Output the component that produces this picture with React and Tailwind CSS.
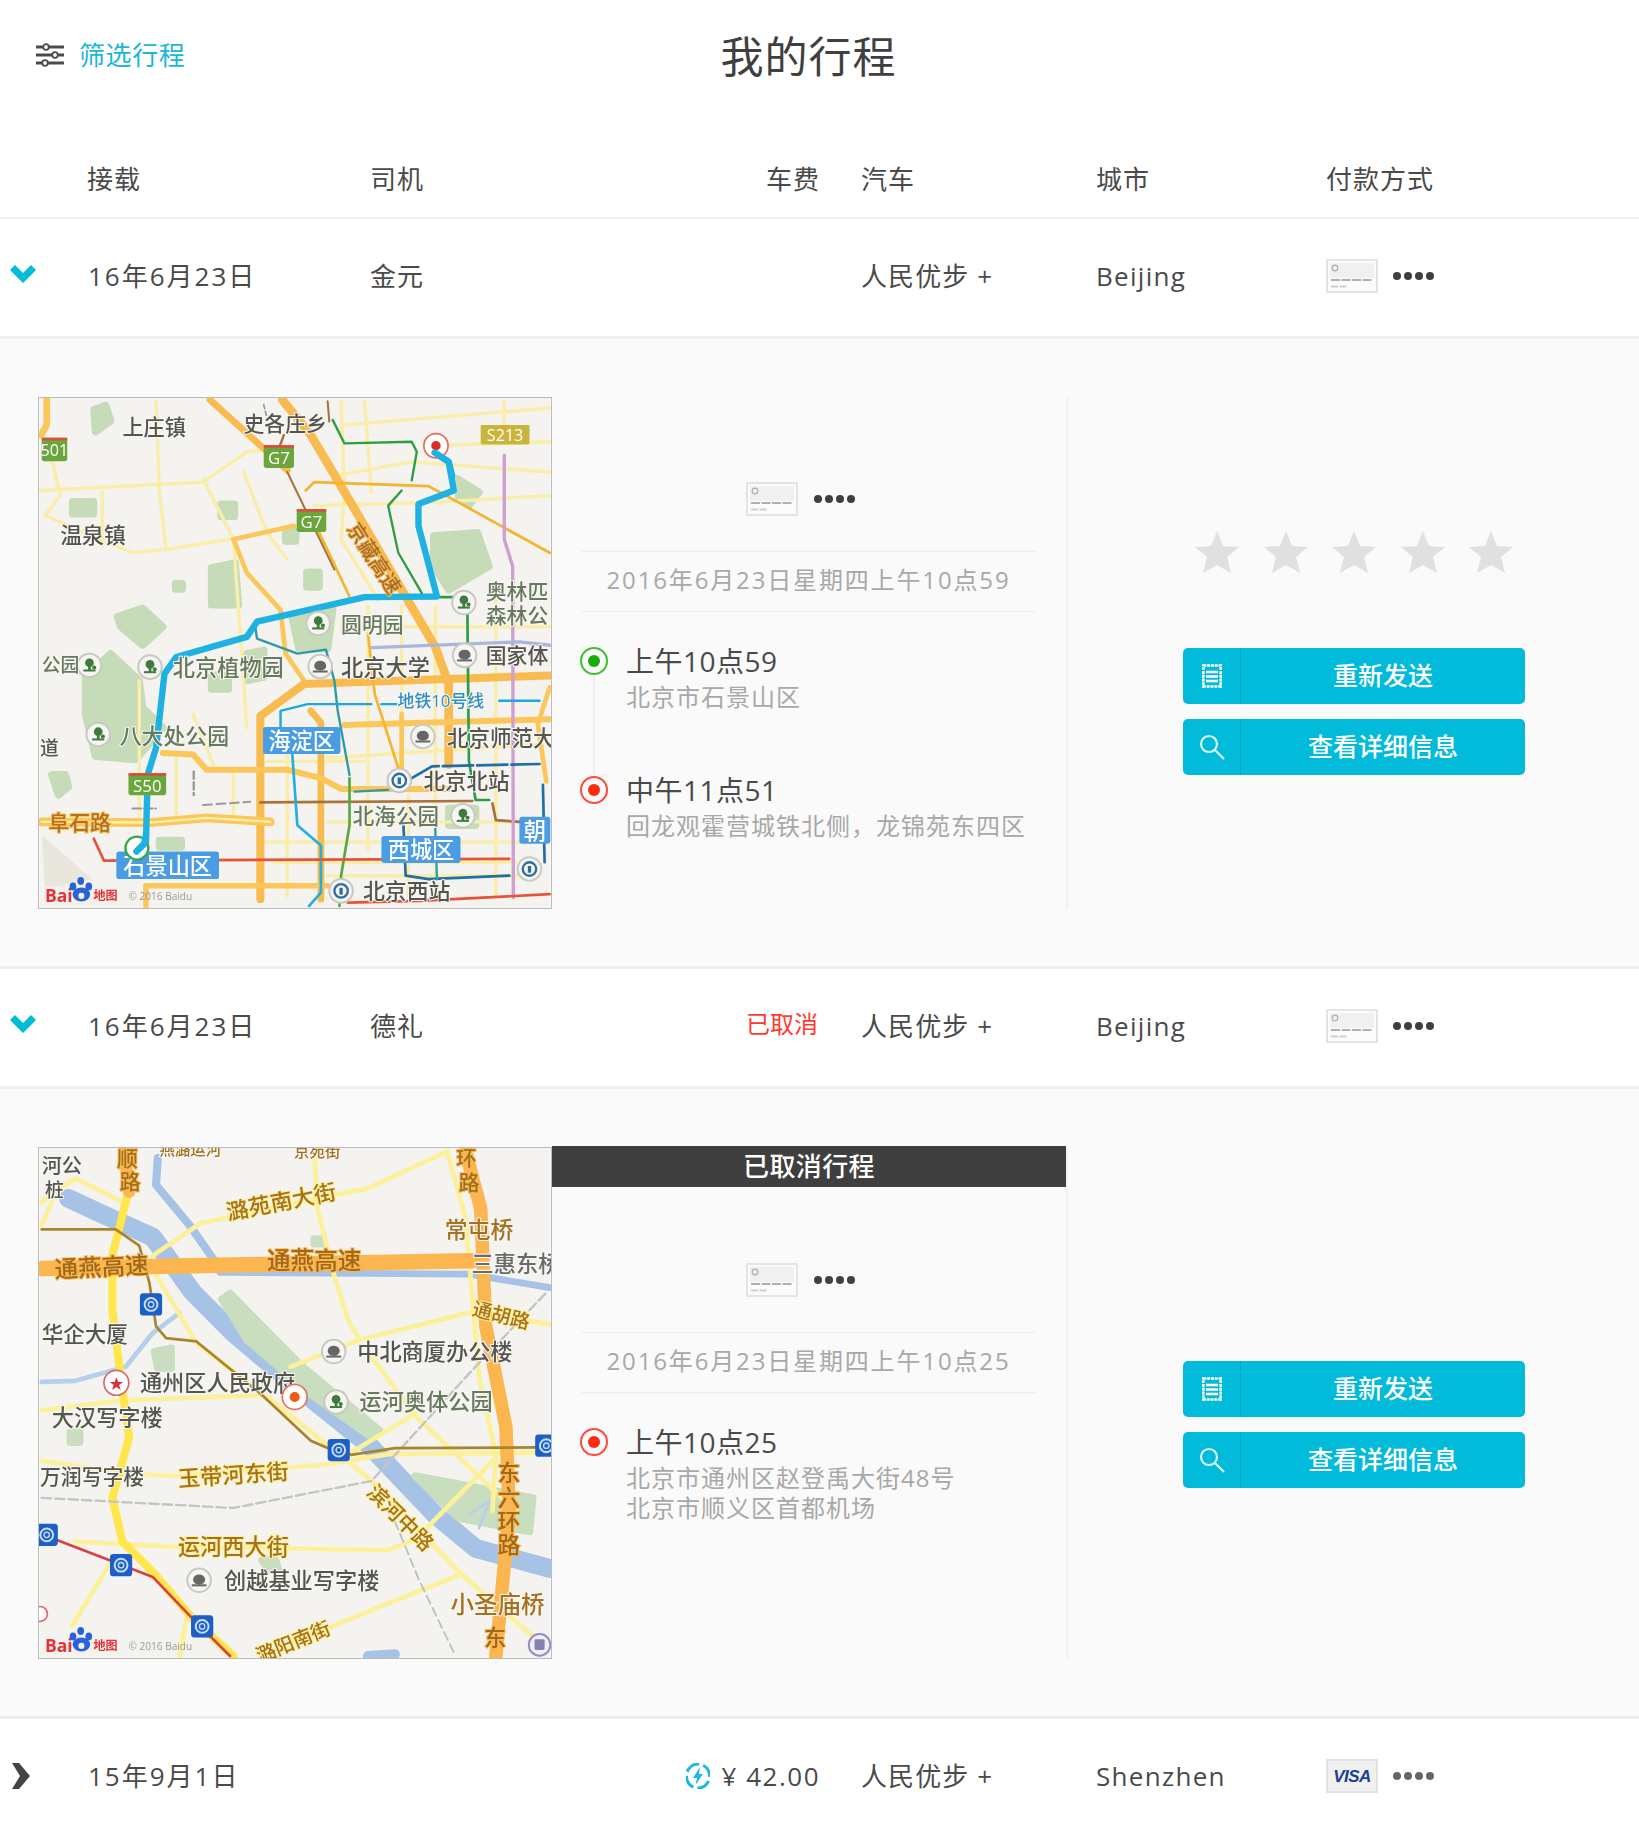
import React from "react";

const FONT = "[font-family:'Open_Sans','Noto_Sans_CJK_SC',sans-serif]";

function Lines({ items }) {
  return (
    <>
      {items.map(([color, width, points, dash], i) => (
        <polyline key={i} points={points} fill="none" stroke={color} strokeWidth={width} strokeLinejoin="round" strokeLinecap="round" strokeDasharray={dash} />
      ))}
    </>
  );
}

function Polys({ color, items }) {
  return (
    <>
      {items.map((p, i) => (
        <polygon key={i} points={p} fill={color} stroke={color} strokeWidth="22" strokeLinejoin="round" />
      ))}
    </>
  );
}

function L({ x, y, s = 62, c = "#55554f", r, h = "#f8f6f2", w = 500, t }) {
  return (
    <text
      x={x}
      y={y}
      fontSize={s}
      fill={c}
      fontWeight={w}
      dominantBaseline="central"
      stroke={h}
      strokeWidth="6"
      paintOrder="stroke"
      transform={r ? `rotate(${r} ${x} ${y})` : undefined}
    >
      {t}
    </text>
  );
}

function Badge({ x, y, w, h, fill, t, s = 62, rx = 8, top }) {
  return (
    <g>
      <rect x={x} y={y} width={w} height={h} rx={rx} fill={fill} />
      {top && <rect x={x} y={y} width={w} height="8" fill={top} />}
      <text x={x + w / 2} y={y + h / 2 + (top ? 3 : 0)} fontSize={s} fontWeight="500" fill="#fff" textAnchor="middle" dominantBaseline="central">
        {t}
      </text>
    </g>
  );
}

function Poi({ x, y, kind = "park" }) {
  const c = kind === "park" ? "#3f7a3e" : "#666";
  return (
    <g>
      <circle cx={x} cy={y} r="35" fill="#f6f5f2" stroke="#c7c9c2" strokeWidth="6" />
      {kind === "park" ? (
        <>
          <circle cx={x} cy={y - 8} r="13" fill={c} />
          <rect x={x - 4} y={y - 2} width="8" height="18" fill={c} />
          <rect x={x - 18} y={y + 12} width="36" height="6" fill={c} />
          <circle cx={x + 14} cy={y + 6} r="6" fill={c} />
        </>
      ) : kind === "station" ? (
        <>
          <circle cx={x} cy={y} r="20" fill="none" stroke="#2f6e9e" strokeWidth="7" />
          <rect x={x - 5} y={y - 9} width="10" height="20" fill="#2f6e9e" />
        </>
      ) : (
        <>
          <ellipse cx={x} cy={y - 2} rx="18" ry="15" fill={c} />
          <rect x={x - 22} y={y + 12} width="44" height="6" fill={c} />
        </>
      )}
    </g>
  );
}

function SubwayBadge({ x, y }) {
  return (
    <g>
      <rect x={x - 33} y={y - 33} width="66" height="66" rx="10" fill="#1c5fc6" />
      <circle cx={x} cy={y} r="19" fill="none" stroke="#c9dcf6" strokeWidth="6" />
      <circle cx={x} cy={y} r="8" fill="none" stroke="#c9dcf6" strokeWidth="4" />
    </g>
  );
}

function BaiduMark() {
  return (
    <g>
      <rect x="38" y="1472" width="222" height="52" fill="#f3f1ec" opacity="0.85" />
      <text x="40" y="1498" fontSize="52" fontWeight="700" fill="#e2323a" dominantBaseline="central">Bai</text>
      <ellipse cx="148" cy="1496" rx="26" ry="21" fill="#2a63d8" />
      <ellipse cx="123" cy="1472" rx="10" ry="12" fill="#2a63d8" />
      <ellipse cx="146" cy="1456" rx="10" ry="12" fill="#2a63d8" />
      <ellipse cx="170" cy="1472" rx="10" ry="12" fill="#2a63d8" />
      <circle cx="148" cy="1500" r="9" fill="#f3f1ec" />
      <text x="184" y="1500" fontSize="36" fontWeight="700" fill="#e2323a" dominantBaseline="central">地图</text>
      <text x="288" y="1500" fontSize="30" fill="#9a9a96" dominantBaseline="central">© 2016 Baidu</text>
    </g>
  );
}

function MapOne() {
  return (
    <svg viewBox="25 20 1516 1516" className="block h-full w-full blur-[0.7px]" role="img">
      <rect x="25" y="20" width="1516" height="1516" fill="#f5f3ef" />
      <Polys
        color="#c6dcb9"
        items={[
          "255,670 330,645 390,700 330,755 265,700",
          "235,780 320,860 330,940 390,1000 310,1095 190,1085 160,960 160,850",
          "535,525 605,510 615,635 535,635",
          "428,572 448,572 448,588 428,588",
          "185,55 220,42 235,88 190,120",
          "122,328 184,328 184,364 122,364",
          "563,336 603,336 603,372 563,372",
          "1195,430 1325,420 1360,520 1240,590 1195,520",
          "1265,260 1330,300 1300,340 1270,320",
          "775,675 895,650 880,765 795,765",
          "818,538 855,538 855,582 818,582",
          "60,1140 100,1140 110,1175 80,1200",
          "755,415 785,415 785,445 755,445",
          "535,845 585,845 585,885 535,885",
          "380,1335 445,1335 445,1355 380,1355",
          "640,780 690,770 690,850 640,860",
          "1240,1240 1320,1240 1320,1290 1240,1290",
        ]}
      />
      <polygon points="30,1320 180,1450 40,1480" fill="#e9e6de" />
      <Lines
        items={[
          ["#f9eda9", 10, "25,295 510,270 640,180 740,170"],
          ["#f9eda9", 10, "370,30 380,300 400,470"],
          ["#f9eda9", 10, "60,200 85,310 40,370 300,480 400,470 590,440"],
          ["#f9eda9", 10, "510,260 600,440 640,1000"],
          ["#f9eda9", 10, "210,300 210,460"],
          ["#f9eda9", 10, "630,240 700,420 760,500"],
          ["#f9eda9", 10, "920,30 930,300 920,440 1030,620"],
          ["#f9eda9", 10, "990,30 1010,300"],
          ["#f9eda9", 10, "930,100 1540,50"],
          ["#f9eda9", 10, "910,250 1130,210 1540,240"],
          ["#f9eda9", 10, "840,340 1200,330 1540,310"],
          ["#f9eda9", 10, "1405,30 1405,140"],
          ["#f9eda9", 10, "1240,160 1540,150"],
          ["#f9eda9", 10, "1000,640 1000,1360"],
          ["#f9eda9", 10, "1200,640 1200,1500"],
          ["#f9eda9", 10, "1380,620 1380,1500"],
          ["#f9eda9", 10, "320,860 320,1270"],
          ["#f9eda9", 10, "430,1090 430,1270"],
          ["#f9eda9", 10, "480,960 540,1110"],
          ["#f9eda9", 10, "600,1130 600,1270"],
          ["#f9eda9", 10, "760,1040 760,1500"],
          ["#f9eda9", 10, "880,1090 1500,1050"],
          ["#f9eda9", 10, "690,1340 1500,1340"],
          ["#f9eda9", 10, "880,1440 1500,1440"],
          ["#f9eda9", 10, "1100,640 1100,960"],
          ["#f9eda9", 10, "920,700 1540,700"],
          ["#f9eda9", 10, "1120,1200 1120,1500"],
          ["#f9eda9", 10, "880,1280 1500,1280"],
          ["#f9eda9", 10, "700,1100 1000,1100"],
          ["#f9eda9", 10, "720,1400 1440,1400"],
          ["#fbc65a", 20, "45,25 45,100 28,130"],
          ["#f8bb50", 20, "530,25 690,170 760,235"],
          ["#f8bb50", 26, "745,25 830,130 960,350 1100,590 1200,760 1240,870 1240,1110"],
          ["#fbc65a", 14, "780,400 600,440 640,540 740,650 755,780 810,860"],
          ["#f8bb50", 24, "1540,845 810,870 680,965 680,1510"],
          ["#f8bb50", 20, "830,950 860,985 860,1510"],
          ["#fbc65a", 18, "390,1075 480,1080 520,1125 760,1125 860,1150 920,1182 1240,1182"],
          ["#fbc65a", 18, "930,992 1540,975"],
          ["#fbc65a", 26, "30,1280 350,1282 520,1268 710,1280"],
          ["#fff1a8", 7, "30,1280 350,1282 520,1268 710,1280"],
          ["#fbc65a", 16, "340,1470 880,1470"],
          ["#fbc65a", 16, "340,1470 340,1530"],
          ["#fbc65a", 14, "1100,960 1100,1182"],
          ["#f5b52c", 8, "1000,720 1020,900 1090,1120"],
          ["#f5b52c", 8, "855,420 945,610"],
          ["#fbc65a", 14, "1540,880 1505,990 1530,1160"],
          ["#a8733a", 6, "880,30 885,90"],
          ["#a8733a", 7, "750,130 735,170"],
          ["#a8733a", 6, "760,240 900,530"],
          ["#a8733a", 8, "680,1222 1310,1218"],
          ["#a8733a", 8, "1370,1225 1380,1275 1450,1280"],
          ["#f2b531", 8, "815,295 840,270 1180,282 1250,320 1540,480"],
          ["#2e9e45", 7, "895,85 930,155 1130,150 1145,180 1130,265"],
          ["#2e9e45", 7, "1100,295 1060,340 1090,480 1160,600"],
          ["#2e9e45", 8, "1210,612 1295,612 1300,1100 1320,1215 1360,1215"],
          ["#cf9fd2", 10, "1405,190 1405,440 1430,520 1432,1505"],
          ["#aab6de", 10, "1012,762 1450,745 1540,755"],
          ["#2f9aa5", 7, "665,700 670,735 790,780 875,768 900,860 910,950 945,1140"],
          ["#19a9e0", 7, "740,1000 740,950 820,930 1010,930"],
          ["#19a9e0", 7, "1040,930 1090,930"],
          ["#19a9e0", 7, "1390,920 1510,920"],
          ["#25aee0", 8, "775,1080 790,1290 860,1350 860,1490 825,1530"],
          ["#5aa845", 8, "945,1150 945,1290 920,1440 915,1530"],
          ["#2f9aa5", 7, "960,1190 1060,1185"],
          ["#1f6ea8", 8, "1130,1150 1190,1115 1510,1108", "90 12"],
          ["#1f6ea8", 8, "1105,1280 1112,1440 1180,1450 1420,1440"],
          ["#1f6ea8", 8, "1520,1170 1525,1400"],
          ["#2aa0a8", 7, "1200,1300 1205,1450"],
          ["#e2553a", 8, "185,1330 215,1395 1420,1390"],
          ["#e2553a", 8, "940,1520 1150,1515 1540,1495"],
          ["#999", 7, "482,1130 482,1200", "22 10"],
          ["#999", 6, "510,1230 650,1220", "26 14"],
          ["#999", 6, "300,1240 370,1240", "26 8"],
          ["#999", 5, "690,40 700,80", "12 8"],
        ]}
      />
      <Lines items={[["#1db2e2", 19, "1195,180 1240,210 1255,295 1150,335 1150,400 1205,610 990,612 670,685 640,730 430,790 395,840 370,1060 345,1140 340,1340 312,1368"]]} />
      <Poi x={1285} y={628} />
      <Poi x={852} y={690} />
      <Poi x={1287} y={785} kind="bldg" />
      <Poi x={858} y={818} kind="bldg" />
      <Poi x={352} y={820} />
      <Poi x={172} y={815} />
      <Poi x={198} y={1020} />
      <Poi x={1163} y={1026} kind="bldg" />
      <Poi x={1093} y={1157} kind="station" />
      <Poi x={1282} y={1262} />
      <Poi x={920} y={1485} kind="station" />
      <Poi x={1480} y={1420} kind="station" />
      <L x={270} y={105} t="上庄镇" s={63} />
      <L x={630} y={95} t="史各庄乡" s={62} />
      <L x={85} y={425} t="温泉镇" s={65} />
      <L x={920} y={692} t="圆明园" s={62} c="#667a60" />
      <L x={1350} y={595} t="奥林匹" s={62} c="#667a60" />
      <L x={1350} y={665} t="森林公" s={62} c="#667a60" />
      <L x={1350} y={785} t="国家体" s={62} />
      <L x={420} y={822} t="北京植物园" s={66} c="#667a60" />
      <L x={920} y={820} t="北京大学" s={66} />
      <L x={30} y={815} t="公园" s={56} c="#667a60" />
      <L x={262} y={1022} t="八大处公园" s={65} c="#667a60" />
      <L x={1235} y={1028} t="北京师范大" s={64} />
      <L x={1165} y={1158} t="北京北站" s={64} />
      <L x={955} y={1262} t="北海公园" s={64} c="#667a60" />
      <L x={985} y={1485} t="北京西站" s={65} />
      <L x={25} y={1060} t="道" s={56} />
      <L x={50} y={1280} t="阜石路" s={62} c="#b0702a" h="#fbc65a" />
      <L x={955} y={395} t="京藏高速" s={60} c="#a96d24" h="#f3b95a" r={57} />
      <L x={1088} y={920} t="地铁10号线" s={50} c="#2d8fc4" />
      <Badge x={30} y={138} w={76} h={70} fill="#6ba53e" t="501" s={48} top="#d8503c" />
      <Badge x={690} y={160} w={90} h={68} fill="#6ba53e" t="G7" s={50} top="#d8503c" />
      <Badge x={788} y={350} w={88} h={68} fill="#6ba53e" t="G7" s={50} top="#d8503c" />
      <Badge x={288} y={1135} w={112} h={66} fill="#6ba53e" t="S50" s={50} top="#d8503c" />
      <Badge x={1335} y={100} w={145} h={58} fill="#c9b43c" t="S213" s={48} rx={4} />
      <Badge x={688} y={998} w={230} h={80} fill="#4a9de3" t="海淀区" s={66} />
      <Badge x={252} y={1368} w={305} h={82} fill="#4a9de3" t="石景山区" s={66} />
      <Badge x={1040} y={1322} w={235} h={80} fill="#4a9de3" t="西城区" s={66} />
      <Badge x={1450} y={1265} w={92} h={80} fill="#4a9de3" t="朝" s={66} />
      <circle cx="313" cy="1358" r="34" fill="#fff" stroke="#3aa84a" strokeWidth="7" />
      <Lines items={[["#1db2e2", 20, "340,1320 335,1345 312,1368"]]} />
      <circle cx="1202" cy="162" r="36" fill="#fff" stroke="#ea6a57" strokeWidth="5" />
      <circle cx="1202" cy="162" r="14" fill="#d9301e" />
      <Lines items={[["#1db2e2", 19, "1198,182 1240,210 1250,250"]]} />
      <BaiduMark />
    </svg>
  );
}

function MapTwo() {
  return (
    <svg viewBox="25 20 1516 1516" className="block h-full w-full blur-[0.7px]" role="img">
      <rect x="25" y="20" width="1516" height="1516" fill="#f4f3f0" />
      <Lines
        items={[
          ["#a6c3e6", 56, "110,170 250,235 360,285 480,450 600,570 800,740 1000,900 1200,1110 1320,1210 1540,1270"],
          ["#a6c3e6", 24, "375,50 370,130 470,250 540,350"],
          ["#a6c3e6", 20, "560,390 1300,395 1540,435"],
          ["#b7cfea", 14, "30,715 130,712 280,670 360,570 440,510"],
          ["#a6c3e6", 30, "1000,1530 1080,1525"],
        ]}
      />
      <Polys
        color="#c9deBF"
        items={[
          "565,470 590,452 800,665 1035,860 1010,880 820,745 640,590",
          "1140,995 1490,1060 1480,1160 1270,1120",
          "115,865 143,865 143,895 115,895",
          "365,625 415,615 415,675 375,675",
          "685,1245 725,1245 735,1275 705,1275",
          "840,290 865,290 865,305 840,305",
        ]}
      />
      <Lines
        items={[
          ["#b7cfea", 8, "1300,1110 1360,1070 1330,1150"],
          ["#fdf09a", 14, "360,340 500,245 700,200 1000,140 1235,30"],
          ["#fdf09a", 14, "840,30 850,200 900,400 940,530 975,590"],
          ["#fdf09a", 14, "1235,30 1290,230 1330,700 1380,930 1370,1100"],
          ["#fdf09a", 14, "30,180 130,110 270,180"],
          ["#fdf09a", 14, "60,180 30,250"],
          ["#fdf09a", 14, "360,380 490,600 700,760 1000,1000 1270,1280 1500,1480"],
          ["#fdf09a", 14, "770,670 975,590 1320,505 1540,545"],
          ["#fdf09a", 14, "1010,640 1140,815 1440,1100"],
          ["#fdf09a", 14, "30,800 270,770 680,755"],
          ["#fdf09a", 14, "950,925 1140,810"],
          ["#fdf09a", 14, "300,990 440,995 880,960 1060,930 1540,925"],
          ["#fdf09a", 14, "30,950 300,990"],
          ["#fdf09a", 14, "130,1190 420,1205 1060,1215 1140,1185 1380,940"],
          ["#fdf09a", 14, "230,1260 120,1440"],
          ["#fdf09a", 14, "460,1420 440,1530"],
          ["#fdf09a", 14, "680,1530 1020,1390 1270,1290"],
          ["#ffe64d", 24, "290,140 240,340 240,500 270,740 290,880 240,1060 270,1190 360,1280 480,1420 600,1530"],
          ["#fbb64f", 46, "30,378 1310,355"],
          ["#fbb64f", 40, "1290,30 1335,200 1350,550 1410,850 1420,1100 1380,1530"],
          ["#fbb64f", 36, "275,30 290,150"],
          ["#c4c4c4", 7, "30,1060 600,1090 1010,1010 1310,680 1530,450", "28 12"],
          ["#bbb", 5, "1080,1130 1150,1300 1260,1530", "26 14"],
          ["#a8842e", 8, "30,262 250,262 320,310 350,420 370,550 400,585 490,595 680,750 830,890 880,912 950,932 1080,912 1510,910"],
          ["#d94040", 8, "75,1185 230,1245 360,1295 470,1410 590,1530"],
        ]}
      />
      <SubwayBadge x={355} y={485} />
      <SubwayBadge x={913} y={918} />
      <SubwayBadge x={266} y={1260} />
      <SubwayBadge x={507} y={1442} />
      <SubwayBadge x={45} y={1170} />
      <SubwayBadge x={1530} y={905} />
      <Poi x={898} y={625} kind="bldg" />
      <Poi x={905} y={775} />
      <Poi x={498} y={1305} kind="bldg" />
      <circle cx="1510" cy="1497" r="32" fill="#f1eff4" stroke="#8f8fc4" strokeWidth="6" />
      <rect x="1495" y="1480" width="30" height="32" rx="4" fill="#8482b4" />
      <circle cx="25" cy="1405" r="22" fill="#fff" stroke="#e26a6a" strokeWidth="5" />
      <circle cx="252" cy="718" r="37" fill="#fff" stroke="#d9666a" strokeWidth="5" />
      <text x="252" y="718" fontSize="44" fill="#d9303a" textAnchor="middle" dominantBaseline="central">★</text>
      <L x={30} y={70} t="河公" s={60} />
      <L x={40} y={145} t="桩" s={56} />
      <L x={380} y={22} t="燕潞运河" s={46} c="#a0701f" />
      <L x={780} y={28} t="京苑街" s={46} c="#a0701f" />
      <L x={254} y={50} t="顺" s={62} c="#a0701f" h="#fbb64f" />
      <L x={262} y={118} t="路" s={62} c="#a0701f" h="#fbb64f" />
      <L x={1262} y={50} t="环" s={60} c="#a0701f" h="#fbb64f" />
      <L x={1270} y={120} t="路" s={62} c="#a0701f" h="#fbb64f" />
      <L x={580} y={210} t="潞苑南大街" s={66} c="#a6711f" h="#fdf09a" r={-11} />
      <L x={1228} y={262} t="常屯桥" s={68} c="#a6711f" />
      <L x={68} y={380} t="通燕高速" s={70} c="#a0681a" h="#fbb64f" r={-3} />
      <L x={700} y={352} t="通燕高速" s={70} c="#a0681a" h="#fbb64f" />
      <L x={1308} y={362} t="三惠东桥" s={66} c="#6a6a66" />
      <L x={1312} y={495} t="通胡路" s={58} c="#a6711f" h="#fdf09a" r={14} />
      <L x={30} y={570} t="华企大厦" s={64} />
      <L x={968} y={625} t="中北商厦办公楼" s={66} />
      <L x={322} y={718} t="通州区人民政府" s={66} />
      <L x={975} y={775} t="运河奥体公园" s={66} c="#667a60" />
      <L x={60} y={822} t="大汉写字楼" s={66} />
      <L x={25} y={995} t="万润写字楼" s={62} />
      <L x={435} y={1002} t="玉带河东街" s={66} c="#a6711f" h="#fdf09a" r={-4} />
      <L x={1010} y={1030} t="滨河中路" s={62} c="#a6711f" h="#fdf09a" r={45} />
      <L x={435} y={1205} t="运河西大街" s={66} c="#a6711f" h="#fdf09a" />
      <L x={572} y={1305} t="创越基业写字楼" s={66} />
      <L x={1385} y={985} t="东" s={68} c="#a0681a" h="#fbb64f" />
      <L x={1385} y={1060} t="六" s={68} c="#a0681a" h="#fbb64f" />
      <L x={1385} y={1130} t="环" s={68} c="#a0681a" h="#fbb64f" />
      <L x={1385} y={1200} t="路" s={68} c="#a0681a" h="#fbb64f" />
      <L x={1245} y={1375} t="小圣庙桥" s={70} c="#a6711f" />
      <L x={1345} y={1475} t="东" s={66} c="#a0681a" h="#fbb64f" />
      <L x={670} y={1530} t="潞阳南街" s={58} c="#a6711f" h="#fdf09a" r={-22} />
      <circle cx="782" cy="760" r="37" fill="#fff" stroke="#ee7050" strokeWidth="5" />
      <circle cx="782" cy="760" r="15" fill="#f05a14" />
      <BaiduMark />
    </svg>
  );
}

function FilterIcon() {
  return (
    <svg width="28" height="24" viewBox="0 0 28 24" className="shrink-0 text-[#4a4a4a]">
      <g stroke="currentColor" strokeWidth="3" fill="#fff">
        <line x1="0" y1="4" x2="28" y2="4" />
        <line x1="0" y1="12" x2="28" y2="12" />
        <line x1="0" y1="20" x2="28" y2="20" />
        <circle cx="10" cy="4" r="2.8" strokeWidth="1.8" />
        <circle cx="19" cy="12" r="2.8" strokeWidth="1.8" />
        <circle cx="9" cy="20" r="2.8" strokeWidth="1.8" />
      </g>
    </svg>
  );
}

function ChevronDown() {
  return (
    <svg width="26" height="18" viewBox="0 0 26 18" className="ml-[10px] -mt-[5px]">
      <path d="M0 5 L5 0 L13 8 L21 0 L26 5 L13 18 Z" fill="#00bcd9" />
    </svg>
  );
}

function ChevronRight() {
  return (
    <svg width="18" height="26" viewBox="0 0 18 26" className="ml-[12px]">
      <path d="M0 0 L7 0 L18 13 L7 26 L0 26 L8 13 Z" fill="#444" />
    </svg>
  );
}

function CardIcon() {
  return (
    <svg width="52" height="34" viewBox="0 0 52 34" className="shrink-0">
      <rect x="1" y="1" width="50" height="32" fill="#fbfbfb" stroke="#e4e4e4" strokeWidth="2" />
      <rect x="4" y="4" width="44" height="15" fill="#f0f0f0" />
      <circle cx="9" cy="9" r="2.8" fill="none" stroke="#b0b0b0" strokeWidth="1.3" />
      <line x1="5" y1="21" x2="46" y2="21" stroke="#b0b0b0" strokeWidth="2.2" strokeDasharray="9 1.5" />
      <line x1="5" y1="27.5" x2="21" y2="27.5" stroke="#d0d0d0" strokeWidth="2" strokeDasharray="7 1.5" />
    </svg>
  );
}

function VisaIcon() {
  return (
    <div className="flex h-[34px] w-[52px] shrink-0 items-center justify-center border-2 border-[#e2e2e2] bg-[#f0f0f0] text-[17px] font-bold italic leading-none tracking-[-0.5px] text-[#1a3f8f] [font-family:'Liberation_Sans',sans-serif]">
      VISA
    </div>
  );
}

function Dots({ color = "bg-[#3f3f3f]" }) {
  return (
    <div className="flex gap-[3.5px]">
      <span className={`h-[7.5px] w-[7.5px] rounded-full ${color}`} />
      <span className={`h-[7.5px] w-[7.5px] rounded-full ${color}`} />
      <span className={`h-[7.5px] w-[7.5px] rounded-full ${color}`} />
      <span className={`h-[7.5px] w-[7.5px] rounded-full ${color}`} />
    </div>
  );
}

function Row({ chevron, date, driver, fare, city, card, dots }) {
  return (
    <div className="grid h-[120px] grid-cols-[88px_282px_250px_200px_276px_230px_1fr] items-center border-b-[3px] border-[#efefef] pb-[3px] text-[26px] tracking-[1.1px] text-[#4a4a4a]">
      <div className="flex items-center">{chevron}</div>
      <div className="tracking-[2px]">{date}</div>
      <div>{driver}</div>
      <div className="flex items-center justify-end">{fare}</div>
      <div className="pl-[41px]">人民优步 +</div>
      <div className="tracking-[1.3px]">{city}</div>
      <div className="flex items-center gap-[15px]">
        {card}
        {dots}
      </div>
    </div>
  );
}

function Pin({ color, ring }) {
  return (
    <div className={`mt-[4px] flex h-[28px] w-[28px] shrink-0 items-center justify-center rounded-full border-2 ${ring}`}>
      <span className={`h-[12px] w-[12px] rounded-full ${color}`} />
    </div>
  );
}

function Stop({ pinColor, pinRing, time, lines, connector, tall }) {
  return (
    <div className={`-ml-[1px] flex gap-[18px] ${tall ? "h-[129px]" : ""}`}>
      <div className="flex w-[28px] shrink-0 flex-col items-center">
        <Pin color={pinColor} ring={pinRing} />
        {connector && <div className="-mb-[4px] w-[2px] flex-1 bg-[#eeeeee]" />}
      </div>
      <div>
        <div className="text-[28px] leading-[36px] tracking-[0.5px] text-[#4a4a4a]">{time}</div>
        <div className="mt-[3px] text-[24px] leading-[30px] tracking-[1px] text-[#a8a8a8]">
          {lines.map((l) => (
            <div key={l}>{l}</div>
          ))}
        </div>
      </div>
    </div>
  );
}

function Middle({ date, banner, children }) {
  return (
    <div className="h-[512px] w-[516px] shrink-0 border-r-2 border-[#f1f1f1]">
      {banner && (
        <div className="-mt-px flex h-[41px] items-center justify-center bg-[#3f3f3f] pb-[1px] text-[26px] font-medium tracking-[0.4px] text-white">已取消行程</div>
      )}
      <div className={`pl-[29px] pr-[30px] ${banner ? "pt-[76px]" : "pt-[85px]"}`}>
        <div className="flex h-[34px] items-center justify-center gap-[16px] pr-[16px]">
          <CardIcon />
          <Dots />
        </div>
        <div className="mt-[35px] flex h-[61px] items-center justify-center border-y border-[#eeeeee] pb-[3px] text-[24px] tracking-[1.85px] text-[#a8a8a8]">{date}</div>
        <div className="mt-[31px]">{children}</div>
      </div>
    </div>
  );
}

function ActionButton({ icon, label }) {
  return (
    <div className="flex h-[56px] w-[342px] overflow-hidden rounded-[5px] bg-[#02bbda] text-white">
      <div className="flex w-[58px] items-center justify-center border-r border-[#00a8c4]">{icon}</div>
      <div className="flex flex-1 items-center justify-center text-[25px] font-medium">{label}</div>
    </div>
  );
}

function ReceiptIcon() {
  return (
    <svg width="20" height="24" viewBox="0 0 20 24" fill="none" stroke="#fff" strokeWidth="2.6">
      <path d="M1.3 1.5 L18.7 1.5 L18.7 22.5 L1.3 22.5 Z" strokeDasharray="3 0.8" />
      <path d="M4 8 H16 M4 12.5 H16 M4 17 H16" strokeWidth="2.6" />
    </svg>
  );
}

function SearchIcon() {
  return (
    <svg width="26" height="26" viewBox="0 0 26 26" fill="none" stroke="#dff7fb" strokeWidth="2.2">
      <circle cx="10" cy="10" r="8" />
      <line x1="16" y1="16" x2="25" y2="25" />
    </svg>
  );
}

function Buttons() {
  return (
    <div className="flex flex-col gap-[15px]">
      <ActionButton icon={<ReceiptIcon />} label="重新发送" />
      <ActionButton icon={<SearchIcon />} label="查看详细信息" />
    </div>
  );
}

function Star() {
  return (
    <svg width="44" height="42" viewBox="0 0 44 42" fill="#e0e0e0">
      <path d="M22 0 L28 15 L44 16 L32 26 L36 42 L22 34 L8 42 L12 26 L0 16 L16 15 Z" />
    </svg>
  );
}

function Panel({ map, middle, right }) {
  return (
    <div className="flex h-[630px] items-start border-b-[3px] border-[#efefef] bg-[#fafafa] pl-[38px] pt-[58px]">
      <div className="h-[512px] w-[514px] shrink-0 border border-[#bbbbbb]">{map}</div>
      {middle}
      <div className="ml-[115px] w-[342px]">{right}</div>
    </div>
  );
}

export default function App() {
  return (
    <div className={`h-[1821px] overflow-hidden bg-white ${FONT}`}>
      <div className="relative h-[110px]">
        <div className="flex items-center gap-[15px] pl-[36px] pt-[40px]">
          <FilterIcon />
          <span className="text-[26px] leading-[30px] tracking-[0.6px] text-[#1ab7d8]">筛选行程</span>
        </div>
        <div className="absolute left-0 right-[22px] top-[30px] text-center text-[43px] leading-[54px] tracking-[1px] text-[#3f3f3f]">我的行程</div>
      </div>
      <div className="grid h-[109px] grid-cols-[88px_282px_250px_200px_276px_230px_1fr] items-end border-b-[2px] border-[#efefef] pb-[20px] text-[26px] leading-[36px] tracking-[1px] text-[#4a4a4a]">
        <div />
        <div className="-ml-px">接载</div>
        <div>司机</div>
        <div className="text-right">车费</div>
        <div className="pl-[41px]">汽车</div>
        <div>城市</div>
        <div>付款方式</div>
      </div>

      <Row chevron={<ChevronDown />} date="16年6月23日" driver="金元" city="Beijing" card={<CardIcon />} dots={<Dots />} />
      <Panel
        map={<MapOne />}
        middle={
          <Middle date="2016年6月23日星期四上午10点59">
            <Stop pinColor="bg-[#1aad0a]" pinRing="border-[#3fbf2f]" time="上午10点59" lines={["北京市石景山区"]} connector tall />
            <Stop pinColor="bg-[#ff2a12]" pinRing="border-[#ff4a3a]" time="中午11点51" lines={["回龙观霍营城铁北侧，龙锦苑东四区"]} />
          </Middle>
        }
        right={
          <div>
            <div className="mt-[134px] flex justify-between px-[12px]">
              <Star />
              <Star />
              <Star />
              <Star />
              <Star />
            </div>
            <div className="mt-[75px]">
              <Buttons />
            </div>
          </div>
        }
      />

      <Row
        chevron={<ChevronDown />}
        date="16年6月23日"
        driver="德礼"
        fare={<span className="-mt-[4px] mr-[2px] text-[24px] tracking-normal text-[#ff3b30]">已取消</span>}
        city="Beijing"
        card={<CardIcon />}
        dots={<Dots />}
      />
      <Panel
        map={<MapTwo />}
        middle={
          <Middle date="2016年6月23日星期四上午10点25" banner>
            <Stop pinColor="bg-[#ff2a12]" pinRing="border-[#ff4a3a]" time="上午10点25" lines={["北京市通州区赵登禹大街48号", "北京市顺义区首都机场"]} />
          </Middle>
        }
        right={
          <div className="mt-[214px]">
            <Buttons />
          </div>
        }
      />

      <Row
        chevron={<ChevronRight />}
        date="15年9月1日"
        driver=""
        fare={
          <span className="flex items-center gap-[12px] tracking-[1.5px]">
            <svg width="24" height="26" viewBox="0 0 24 26" fill="none">
              <path d="M12 1 A11.5 12 0 1 0 12 25 A11.5 12 0 1 0 12 1" stroke="#22b8dc" strokeWidth="3" strokeDasharray="14 4" />
              <path d="M14 4 L7 15 L11 15 L9.5 22 L17 11 L13 11 Z" fill="#22b8dc" />
            </svg>
            <span>¥ 42.00</span>
          </span>
        }
        city="Shenzhen"
        card={<VisaIcon />}
        dots={<Dots color="bg-[#666]" />}
      />
    </div>
  );
}
